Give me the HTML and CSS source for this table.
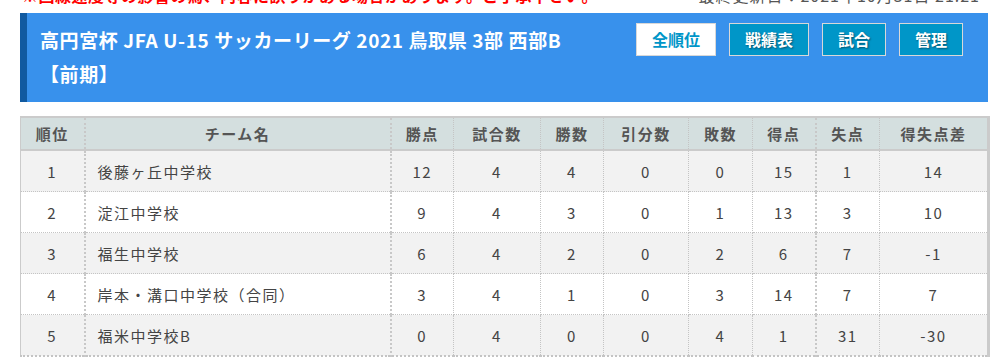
FILE: index.html
```html
<!DOCTYPE html>
<html lang="ja">
<head>
<meta charset="utf-8">
<link rel="stylesheet" href="styles.css">
</head>
<body>
<div class="notice">
  <span class="notice-red">※回線速度等の影響の為、内容に誤りがある場合があります。ご了承下さい。</span>
  <span class="notice-date">最終更新日：2021年10月31日 21:21</span>
</div>
<div class="league">
  <div class="league-title">
    <div class="title-text">高円宮杯 JFA U-15 サッカーリーグ 2021 鳥取県 3部 西部B</div>
    <div class="title-text">【前期】</div>
  </div>
  <div class="league-nav">
    <span class="nav-btn active">全順位</span>
    <span class="nav-btn">戦績表</span>
    <span class="nav-btn">試合</span>
    <span class="nav-btn">管理</span>
  </div>
</div>
<table class="standings">
  <colgroup>
    <col style="width:64px"><col style="width:306px"><col style="width:63px"><col style="width:87px"><col style="width:63px"><col style="width:85px"><col style="width:64px"><col style="width:63px"><col style="width:64px"><col style="width:109px">
  </colgroup>
  <thead>
    <tr>
      <th class="thick">順位</th><th class="thick">チーム名</th><th>勝点</th><th>試合数</th><th>勝数</th><th>引分数</th><th>敗数</th><th class="thick">得点</th><th>失点</th><th>得失点差</th>
    </tr>
  </thead>
  <tbody>
    <tr><td class="thick">1</td><td class="thick name">後藤ヶ丘中学校</td><td>12</td><td>4</td><td>4</td><td>0</td><td>0</td><td class="thick">15</td><td>1</td><td>14</td></tr>
    <tr><td class="thick">2</td><td class="thick name">淀江中学校</td><td>9</td><td>4</td><td>3</td><td>0</td><td>1</td><td class="thick">13</td><td>3</td><td>10</td></tr>
    <tr><td class="thick">3</td><td class="thick name">福生中学校</td><td>6</td><td>4</td><td>2</td><td>0</td><td>2</td><td class="thick">6</td><td>7</td><td>-1</td></tr>
    <tr><td class="thick">4</td><td class="thick name">岸本・溝口中学校（合同）</td><td>3</td><td>4</td><td>1</td><td>0</td><td>3</td><td class="thick">14</td><td>7</td><td>7</td></tr>
    <tr><td class="thick">5</td><td class="thick name">福米中学校B</td><td>0</td><td>4</td><td>0</td><td>0</td><td>4</td><td class="thick">1</td><td>31</td><td>-30</td></tr>
  </tbody>
</table>
</body>
</html>
```
FILE: styles.css
```css
html, body {
  margin: 0;
  padding: 0;
  background: #fff;
}
body {
  font-family: "Noto Sans CJK JP", "Noto Sans", sans-serif;
  color: #444;
  overflow: hidden;
}
.notice {
  display: flex;
  justify-content: space-between;
  margin: -20px 18px 0 22px;
  height: 33px;
  line-height: 30px;
  font-size: 16px;
}
.notice-red {
  color: #f00;
  font-weight: bold;
  letter-spacing: 0.5px;
}
.notice-date {
  color: #555;
  letter-spacing: 1px;
}
.league {
  display: flex;
  margin: 0 10px 14px 20px;
  background: #3891ec;
  border-left: 7px solid #115aa0;
  padding: 10px 25px 10px 13px;
  height: 69px;
}
.league-title {
  flex: 1;
}
.title-text {
  color: #fff;
  font-weight: bold;
  font-size: 19px;
  line-height: 34px;
  letter-spacing: 0.6px;
}
.league-nav {
  display: flex;
  gap: 13px;
  align-items: flex-start;
}
.nav-btn {
  display: block;
  border: 1px solid #d8d8d8;
  background: #0096c8;
  color: #fff;
  font-weight: bold;
  font-size: 16px;
  line-height: 31px;
  padding: 0 15px;
  text-shadow: 1px 1px 2px rgba(0,0,0,0.45);
}
.nav-btn.active {
  background: #fff;
  color: #0096c8;
  text-shadow: none;
}
.standings {
  margin-left: 20px;
  width: 968px;
  table-layout: fixed;
  border-collapse: collapse;
  border-top: 2px solid #cbcbcb;
  border-left: 1px solid #cbcbcb;
  border-right: 3px solid #cbcbcb;
  border-bottom: 2px dotted #c4c4c4;
  font-size: 15px;
  letter-spacing: 1.5px;
}
.standings th {
  background: #d4dfdf;
  color: #555;
  font-weight: bold;
  height: 31px;
  padding: 0;
  text-align: center;
  border-right: 1px dotted #c4c4c4;
  border-bottom: 2px solid #cbcbcb;
}
.standings td {
  height: 40px;
  padding: 0;
  text-align: center;
  border-right: 1px dotted #c4c4c4;
  border-bottom: 1px dotted #c4c4c4;
}
.standings th.thick, .standings td.thick {
  border-right: 2px dotted #c8c8c8;
}
.standings td.name {
  text-align: left;
  padding-left: 12px;
}
.standings tbody tr:nth-child(odd) td {
  background: #f2f2f2;
}
.standings tbody tr:nth-child(even) td {
  background: #fff;
}
```
